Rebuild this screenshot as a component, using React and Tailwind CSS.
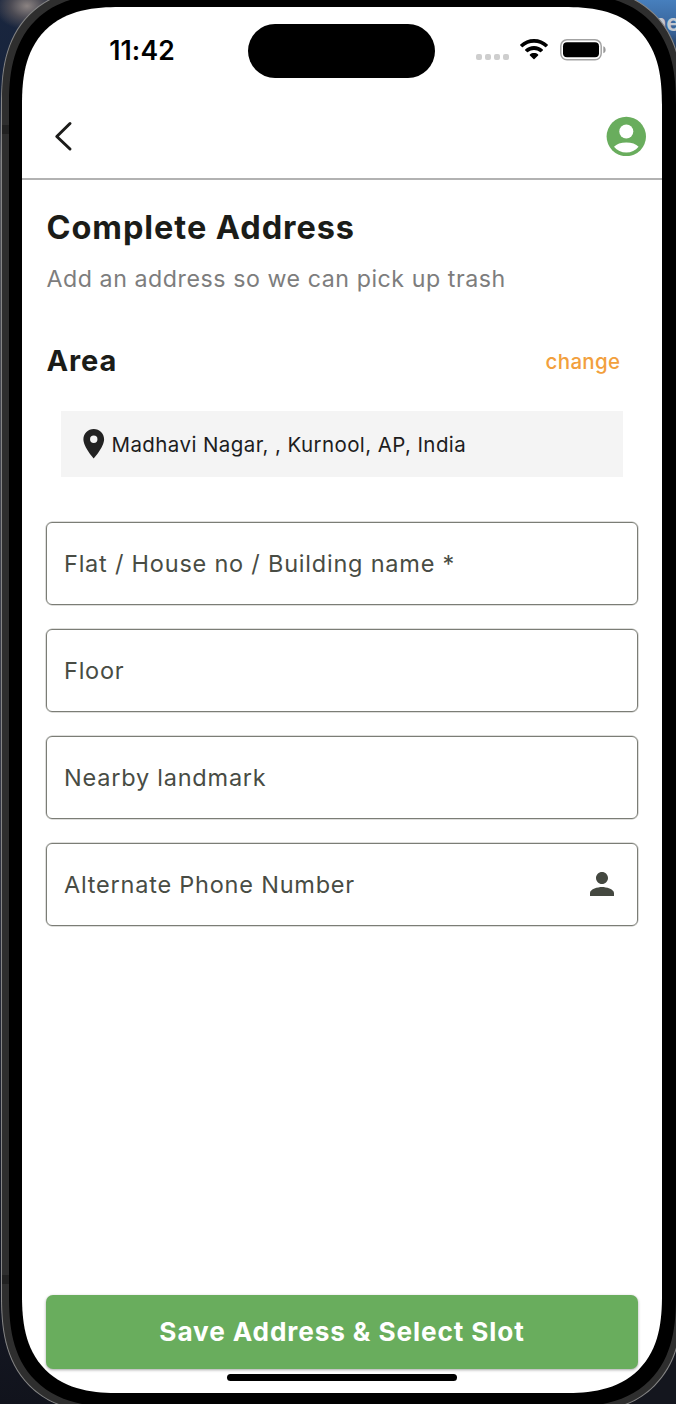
import React from "react";
import { MdPerson, MdLocationOn } from "react-icons/md";

function StatusBar() {
  return (
    <div className="flex h-[86px] items-start">
      <div className="w-[240px] pt-[26px] pl-[1px] text-center text-[26.500px] leading-[34px] font-semibold tracking-[0.100px] text-black">
        11:42
      </div>
      <div className="mt-[17px] -ml-[14px] h-[54px] w-[187px] rounded-full bg-black" />
      <div className="mt-[32px] ml-[41px] flex items-start">
        <div className="mt-[15px] flex gap-[3px]">
          <span className="h-[6px] w-[6px] rounded-[2px] bg-[#cecece]" />
          <span className="h-[6px] w-[6px] rounded-[2px] bg-[#cecece]" />
          <span className="h-[6px] w-[6px] rounded-[2px] bg-[#cecece]" />
          <span className="h-[6px] w-[6px] rounded-[2px] bg-[#cecece]" />
        </div>
        <svg className="ml-[11px] h-[21px] w-[28px]" viewBox="0 0 28 21">
          <path d="M14 0C8.700 0 3.800 2 .3 5.500Q-.2 6 .3 6.500L1.900 8.100Q2.400 8.600 2.900 8.100C5.900 5.300 9.800 3.800 14 3.800S22.100 5.300 25.100 8.100Q25.600 8.600 26.100 8.100L27.700 6.500Q28.200 6 27.700 5.500C24.200 2 19.300 0 14 0Z" />
          <path d="M14 7C10.600 7 7.500 8.300 5.200 10.400Q4.700 10.900 5.200 11.400L7 13.100Q7.500 13.600 8 13.100C9.600 11.700 11.700 10.900 14 10.900S18.400 11.700 20 13.100Q20.500 13.600 21 13.100L22.800 11.400Q23.300 10.900 22.800 10.400C20.500 8.300 17.400 7 14 7Z" />
          <path d="M14 14C12.400 14 11 14.500 9.900 15.400Q9.400 15.900 9.900 16.400L13.500 20.100Q14 20.600 14.500 20.100L18.100 16.400Q18.600 15.900 18.100 15.400C17 14.500 15.600 14 14 14Z" />
        </svg>
        <svg className="ml-[12px] h-[22px] w-[46px]" viewBox="0 0 46 22">
          <rect x="0.8" y="0.8" width="40.400" height="20" rx="6.200" fill="none" stroke="#a3a3a3" strokeWidth="1.500" />
          <rect x="3" y="3.200" width="36" height="15" rx="4" />
          <path d="M43.300 7.200C46.400 8 46.400 13.500 43.300 14.300Z" fill="#9a9a9a" />
        </svg>
      </div>
    </div>
  );
}

function Header() {
  return (
    <header className="flex h-[87px] items-center justify-between border-b-2 border-[#b2b2b2] pt-[2px] pr-[16px] pl-[32px]">
      <svg className="h-[32px] w-[20px]" viewBox="0 0 20 32" fill="none" stroke="#1c1c1a" strokeWidth="3" strokeLinecap="round" strokeLinejoin="round">
        <path d="M16 3.500L2.800 16.500L16 29" />
      </svg>
      <svg className="size-[40px]" viewBox="0 0 40 40">
        <circle cx="20.300" cy="20.500" r="19.700" fill="#69ad5d" />
        <circle cx="20.300" cy="15.500" r="7" fill="#fff" />
        <path d="M8 30.800C10.500 28 15 26.500 20.300 26.500S30.100 28 32.600 30.800C29.500 34.300 25.200 36.600 20.300 36.600S11.100 34.300 8 30.800Z" fill="#fff" />
      </svg>
    </header>
  );
}

function Field({ label, icon }) {
  return (
    <div className="flex h-[83px] items-center justify-between rounded-[6px] border border-[#7b7d76] pt-px pr-[16.500px] pl-[17.500px] shadow-[0_0_0_0.5px_rgba(123,125,118,0.5)]">
      <span className="text-[23.500px] tracking-[0.780px] text-[#484c44]">{label}</span>
      {icon}
    </div>
  );
}

export default function App() {
  return (
    <main
      className="relative h-[1404px] w-[676px] overflow-hidden bg-[#12151f] bg-[linear-gradient(180deg,#19263f_0px,#17233b_90px,#5a5b60_160px,#4b4d55_300px,#353846_800px,#161a27_1250px,#11131c_1404px)]"
      style={{ fontFamily: 'Inter, "Liberation Sans", sans-serif' }}
    >
      <div className="absolute top-0 left-0 h-[30px] w-[60px] bg-[radial-gradient(ellipse_at_45%_20%,#8b8382_0%,#4c4b54_35%,transparent_70%)]" />
      <div className="absolute top-0 right-0 h-[75px] w-[90px] bg-[linear-gradient(180deg,#477fbd_0%,#355f93_45%,#1b2537_75%)]" />
      <div className="absolute right-0 bottom-0 h-[160px] w-[60px] bg-[#14161e]" />
      <span className="absolute top-[9px] left-[652px] text-[23px] leading-[28px] font-bold text-[#c3c8d0]">ne</span>

      <div className="relative -mt-[14px] ml-[1px] h-[1428px] w-[682px] rounded-[102px] border-[1.5px] border-[#858585] bg-[#2e2e2e] p-[6.500px] supports-[corner-shape:squircle]:rounded-[118px] [corner-shape:superellipse(1.35)]">
        <div className="absolute top-[138px] left-0 h-[9px] w-[8px] bg-[#212121]" />
        <div className="absolute top-[1288px] left-0 h-[9px] w-[8px] bg-[#212121]" />
        <div className="relative h-full rounded-[95px] bg-black p-[13px] supports-[corner-shape:squircle]:rounded-[111px] [corner-shape:superellipse(1.35)]">
          <div className="flex h-[1386px] w-[640px] flex-col overflow-hidden rounded-[83px] bg-white supports-[corner-shape:squircle]:rounded-[98px] [corner-shape:superellipse(1.35)]">
            <StatusBar />
            <Header />
            <section className="flex flex-1 flex-col px-[24px] pt-[26px]">
              <h1 className="pl-[1px] text-[32.500px] leading-[44px] font-bold tracking-[0.930px] text-[#1b1c18]">Complete Address</h1>
              <p className="mt-[13px] pl-[1px] text-[23.200px] leading-[32px] tracking-[0.550px] text-[#7d7d7d]">Add an address so we can pick up trash</p>
              <div className="mt-[46px] flex h-[40px] items-center justify-between pr-[17px] pl-[1px]">
                <h2 className="text-[29px] font-bold tracking-[0.900px] text-[#1b1c18]">Area</h2>
                <button className="pt-[3px] text-[20.500px] font-medium tracking-[0.350px] text-[#f2a03d]">change</button>
              </div>
              <div className="mt-[30px] mr-[15px] ml-[15px] flex h-[66px] items-center bg-[#f4f4f4] pl-[15px] text-[20.500px] tracking-[0.410px] text-[#1d1d1d]">
                <MdLocationOn className="size-[35.500px] text-[#222]" />
                <span className="pt-[3px] pl-[0.5px]">Madhavi Nagar, , Kurnool, AP, India</span>
              </div>
              <div className="mt-[45px] flex flex-col gap-[24px]">
                <Field label="Flat / House no / Building name *" />
                <Field label="Floor" />
                <Field label="Nearby landmark" />
                <Field label="Alternate Phone Number" icon={<MdPerson className="mb-px size-[36px] text-[#444840]" />} />
              </div>
              <button className="mt-auto h-[74px] shrink-0 rounded-[7px] bg-[#69ad5d] pt-px pl-px text-[26.200px] font-bold tracking-[0.880px] text-white shadow-[0_1px_3px_rgba(0,0,0,0.35)]">
                Save Address &amp; Select Slot
              </button>
              <div className="mt-[5px] mb-[12px] h-[7px] w-[230px] shrink-0 self-center rounded-full bg-black" />
            </section>
          </div>
        </div>
      </div>
    </main>
  );
}
